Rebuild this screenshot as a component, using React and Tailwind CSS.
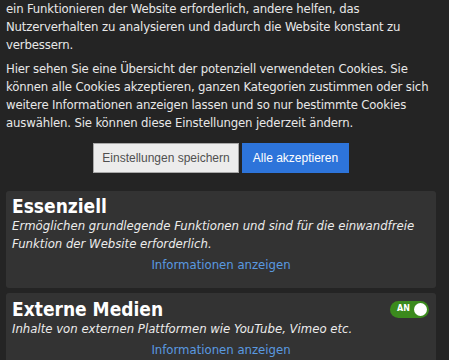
import React from "react";

const Toggle = () => (
  <div className="flex h-[17px] w-[39px] items-center justify-between rounded-full bg-[#3b8a1d] pl-[7px] pr-[2px]">
    <span className="font-['DejaVu_Sans',sans-serif] text-[8px] font-bold text-white">AN</span>
    <span className="h-[13px] w-[13px] rounded-full bg-white" />
  </div>
);

const Category = ({ title, text, toggle, top }) => (
  <div className={`rounded-[3px] bg-[#333333] px-[6px] pb-[14px] ${top}`}>
    <div className="flex items-center justify-between">
      <h2 className="text-[19px] font-bold leading-[22px] text-white">{title}</h2>
      {toggle && <div className="mr-px">{toggle}</div>}
    </div>
    <p className="text-[13px] italic leading-[18px] text-[#ececec]">{text}</p>
    <div className="mt-[3px] text-center text-[13px] leading-[18px] text-[#5a9ae0]">
      Informationen anzeigen
    </div>
  </div>
);

export default function App() {
  return (
    <div className="h-[360px] overflow-hidden bg-[#242424] pl-[6px] pr-[13px] font-['DejaVu_Sans_Condensed','DejaVu_Sans',sans-serif] text-[#e8e8e8]">
      <p className="text-[13px] leading-[18px] tracking-[-0.15px]">
        ein Funktionieren der Website erforderlich, andere helfen, das
        Nutzerverhalten zu analysieren und dadurch die Website konstant zu
        verbessern.
      </p>
      <p className="mt-[6px] text-[13px] leading-[18px] tracking-[-0.15px]">
        Hier sehen Sie eine Übersicht der potenziell verwendeten Cookies. Sie
        können alle Cookies akzeptieren, ganzen Kategorien zustimmen oder sich
        weitere Informationen anzeigen lassen und so nur bestimmte Cookies
        auswählen. Sie können diese Einstellungen jederzeit ändern.
      </p>

      <div className="mt-[11px] flex justify-center gap-[3px] whitespace-nowrap font-['Liberation_Sans',Arial,sans-serif] text-[12px]">
        <button className="h-[30px] w-[146px] border border-[#a8a8a8] bg-[#ececec] text-[#505050]">
          Einstellungen speichern
        </button>
        <button className="h-[30px] w-[107px] bg-[#2d74da] text-white">
          Alle akzeptieren
        </button>
      </div>

      <div className="mt-[18px] flex flex-col gap-[5px]">
        <Category
          title="Essenziell"
          top="pt-[4px]"
          text="Ermöglichen grundlegende Funktionen und sind für die einwandfreie Funktion der Website erforderlich."
        />
        <Category
          title="Externe Medien"
          top="pt-[5px]"
          toggle={<Toggle />}
          text="Inhalte von externen Plattformen wie YouTube, Vimeo etc."
        />
      </div>
    </div>
  );
}
